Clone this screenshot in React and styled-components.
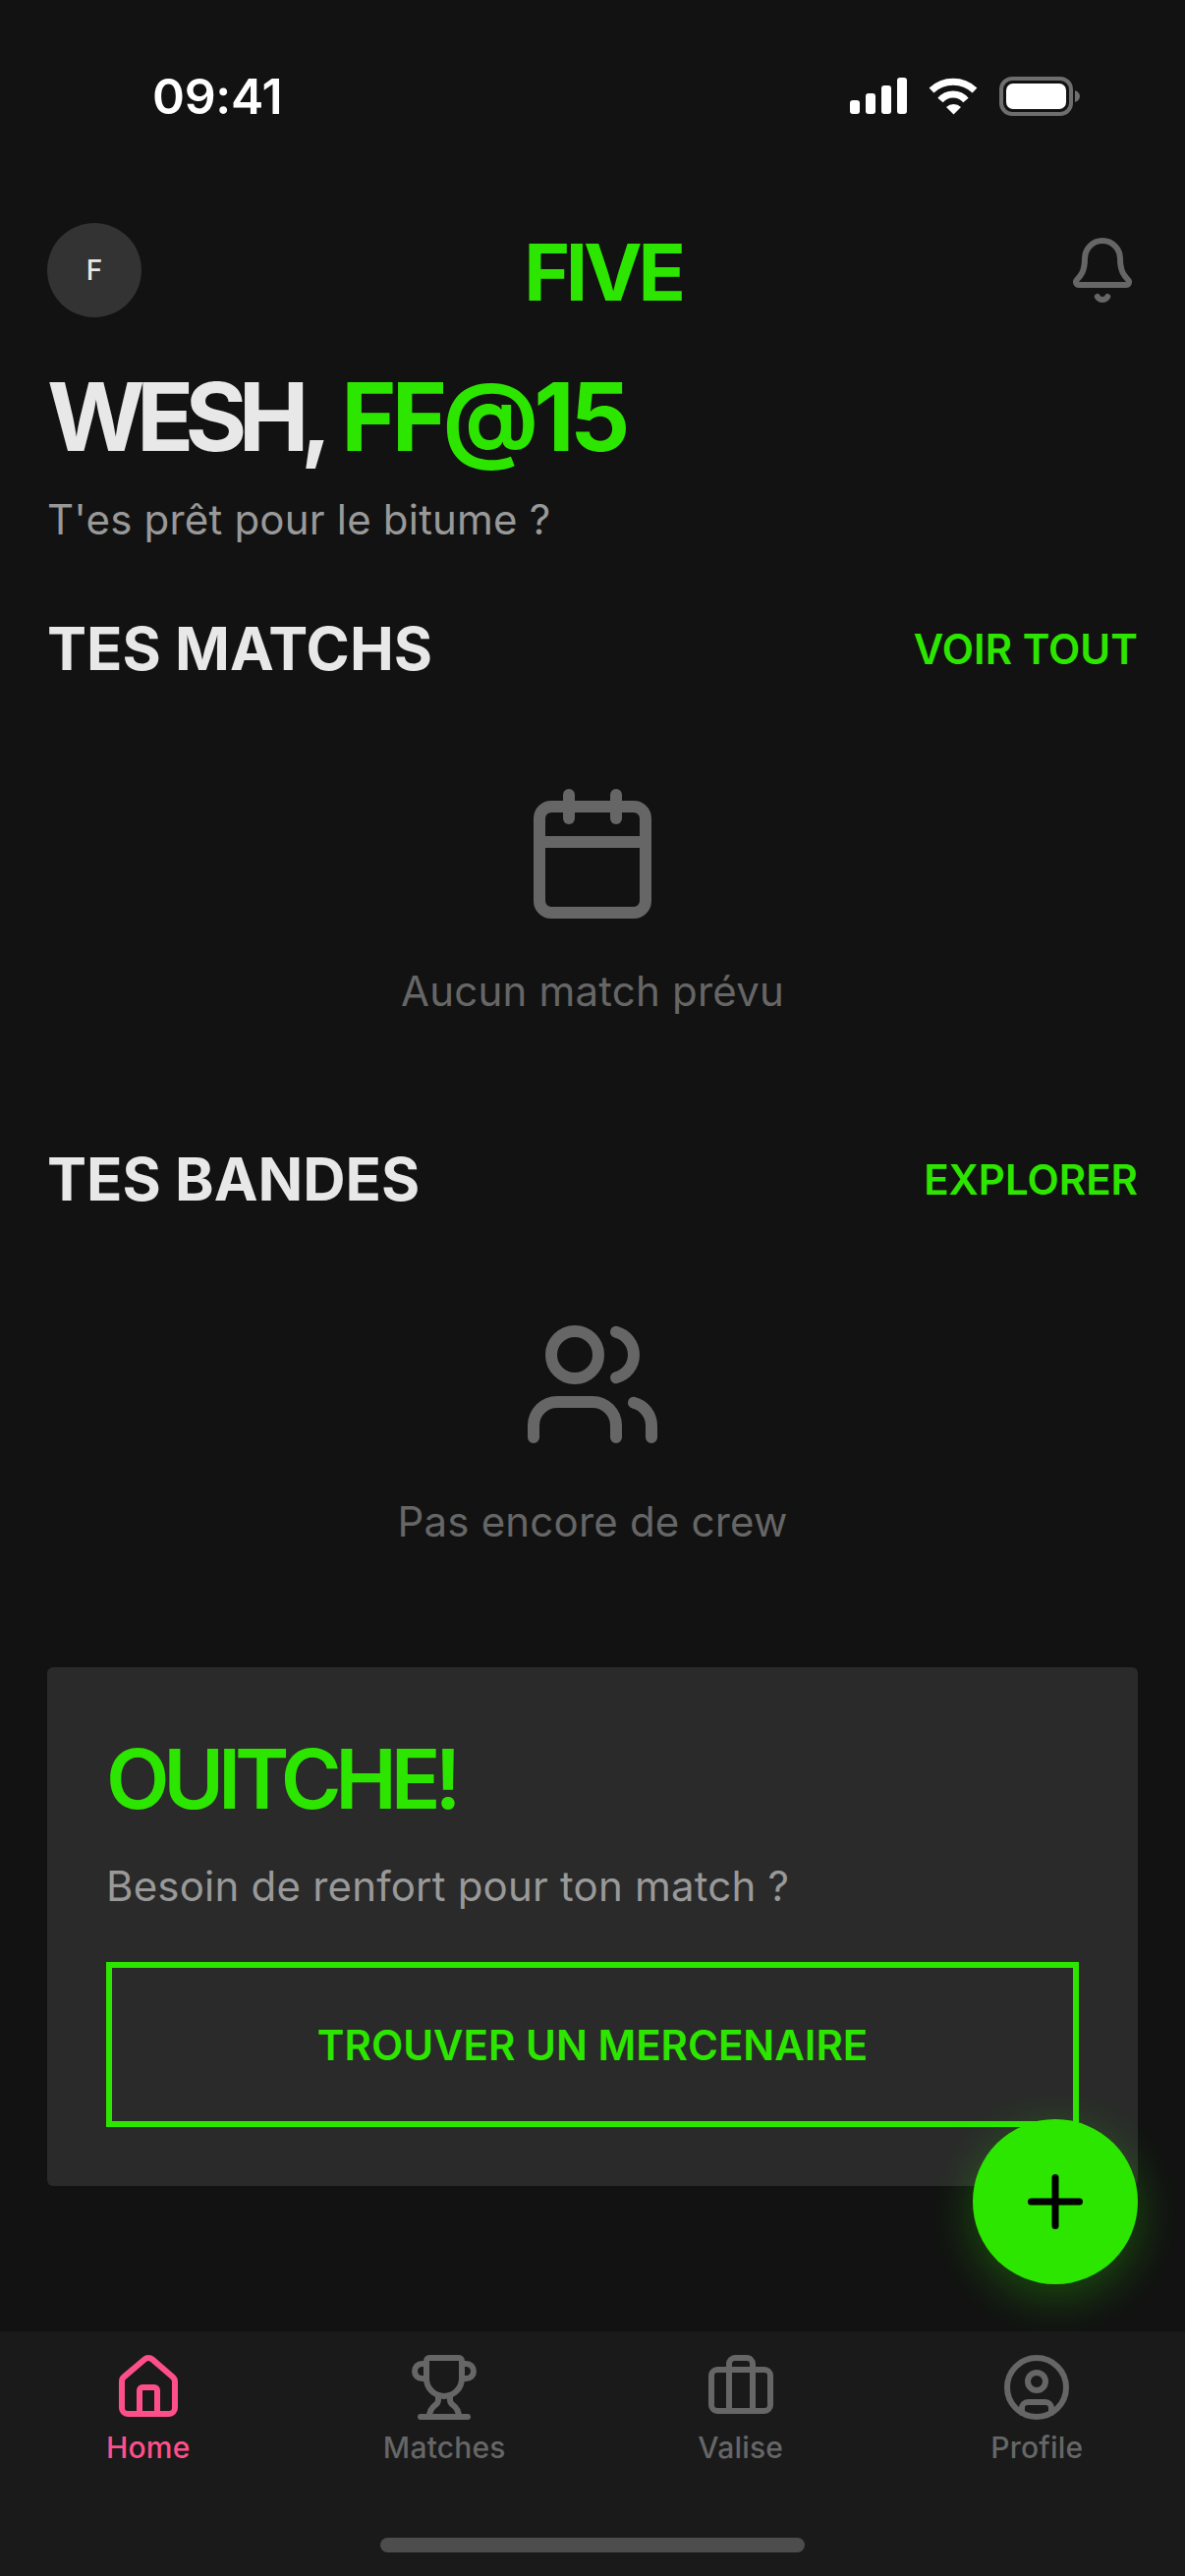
import styled, { createGlobalStyle } from "styled-components"
import { Bell, Briefcase, Calendar, CircleUser, House, Plus, Trophy, Users } from "lucide-react"

const GREEN = "#2de600"
const GREY = "#666666"
const PINK = "#ff4f8b"

const GlobalStyle = createGlobalStyle`
    html, body {
        margin: 0;
        padding: 0;
        background: #121212;
    }
    * {
        box-sizing: border-box;
    }
`

const Screen = styled.div`
    position: relative;
    width: 1206px;
    height: 2622px;
    display: flex;
    flex-direction: column;
    background: #121212;
    font-family: Inter, "Liberation Sans", sans-serif;
    overflow: hidden;
`

const StatusBar = styled.div`
    height: 196px;
    flex-shrink: 0;
    display: flex;
    justify-content: space-between;
    align-items: center;
    padding: 0 106px 0 155px;
`
const Time = styled.div`
    font-size: 50px;
    font-weight: 600;
    letter-spacing: -0.3px;
    color: #fff;
`
const StatusIcons = styled.svg`
    display: block;
    width: 235px;
    height: 40px;
`

const Main = styled.div`
    flex: 1;
    padding: 31px 48px 0;
`
const Header = styled.div`
    display: flex;
    justify-content: space-between;
    align-items: center;
    height: 96px;
`
const Avatar = styled.div`
    width: 96px;
    height: 96px;
    border-radius: 50%;
    display: flex;
    justify-content: center;
    align-items: center;
    background: #333333;
    color: #e8e8e8;
    font-size: 28px;
    font-weight: 500;
`
const Logo = styled.div`
    margin: 3px 3px 0 0;
    font-size: 80px;
    line-height: 92px;
    font-weight: 700;
    letter-spacing: -4.3px;
    color: ${GREEN};
`
const Greeting = styled.h1`
    margin: 43px 0 0;
    font-size: 96px;
    line-height: 116px;
    font-weight: 700;
    letter-spacing: -8.7px;
    color: #e8e8e8;
`
const Accent = styled.span`
    margin-left: 7px;
    letter-spacing: -4.7px;
    color: ${GREEN};
`
const Tagline = styled.p`
    margin: 17px 0 0;
    font-size: 42px;
    line-height: 60px;
    letter-spacing: 0.2px;
    color: #999999;
`

const SectionHeader = styled.div`
    display: flex;
    justify-content: space-between;
    align-items: center;
    margin-top: ${props => props.$top}px;
    height: 60px;
`
const SectionTitle = styled.h2`
    margin: 0;
    font-size: 60px;
    font-weight: 700;
    color: #e8e8e8;
`
const SectionLink = styled.a`
    font-size: 42px;
    font-weight: 600;
    color: ${GREEN};
`
const EmptyState = styled.div`
    display: flex;
    flex-direction: column;
    align-items: center;
    gap: 40px;
    padding-top: 107px;
    color: ${GREY};
`
const EmptyText = styled.div`
    font-size: 42px;
    line-height: 56px;
    letter-spacing: 0.2px;
`

const Card = styled.div`
    margin-top: 120px;
    padding: 64px 60px 60px;
    border-radius: 6px;
    background: #2a2a2a;
`
const CardTitle = styled.h3`
    margin: 0;
    font-size: 84px;
    line-height: 100px;
    font-weight: 600;
    letter-spacing: -6.2px;
    color: ${GREEN};
`
const CardText = styled.p`
    margin: 29px 0 0;
    font-size: 42px;
    line-height: 60px;
    letter-spacing: 0.2px;
    color: #999999;
`
const OutlineButton = styled.button`
    display: block;
    width: 100%;
    height: 168px;
    margin-top: 47px;
    border: 6px solid ${GREEN};
    border-radius: 0;
    background: transparent;
    color: ${GREEN};
    font-family: inherit;
    font-size: 42px;
    font-weight: 600;
`

const Fab = styled.button`
    position: absolute;
    right: 48px;
    bottom: 297px;
    width: 168px;
    height: 168px;
    display: flex;
    justify-content: center;
    align-items: center;
    border: none;
    border-radius: 50%;
    background: ${GREEN};
    color: #000;
    box-shadow: 0 12px 48px rgba(45, 230, 0, 0.3);
`

const TabBar = styled.div`
    position: relative;
    height: 249px;
    flex-shrink: 0;
    display: flex;
    align-items: flex-start;
    padding-top: 21px;
    background: #1a1a1a;
`
const Tab = styled.div`
    flex: 1;
    display: flex;
    flex-direction: column;
    align-items: center;
    gap: 4px;
    color: ${props => (props.$active ? PINK : GREY)};
`
const TabLabel = styled.span`
    font-size: 30px;
    line-height: 43px;
    font-weight: 500;
    letter-spacing: 0.2px;
`
const HomeIndicator = styled.div`
    position: absolute;
    left: 387px;
    bottom: 24px;
    width: 432px;
    height: 15px;
    border-radius: 8px;
    background: #4d4d4d;
`

const tabs = [
    { label: "Home", Icon: House, active: true },
    { label: "Matches", Icon: Trophy },
    { label: "Valise", Icon: Briefcase },
    { label: "Profile", Icon: CircleUser },
]

const App = () => {
    return (
        <Screen>
            <GlobalStyle />
            <StatusBar>
                <Time>09:41</Time>
                <StatusIcons viewBox="0 0 235 40">
                    <rect x="0" y="24" width="10" height="14" rx="3" fill="#fff" />
                    <rect x="16" y="17" width="10" height="21" rx="3" fill="#fff" />
                    <rect x="32" y="9" width="10" height="29" rx="3" fill="#fff" />
                    <rect x="48" y="1" width="10" height="37" rx="3" fill="#fff" />
                    <path d="M83 14a32 32 0 0 1 44 0" fill="none" stroke="#fff" strokeWidth="7" />
                    <path d="M92 24a17 17 0 0 1 26 0" fill="none" stroke="#fff" strokeWidth="7" />
                    <path d="M98 31a11 11 0 0 1 15 0l-7.5 7.5z" fill="#fff" />
                    <rect x="154" y="2" width="71" height="36" rx="11" fill="none" stroke="#6e6e6e" strokeWidth="4" />
                    <rect x="159" y="7" width="61" height="26" rx="7" fill="#fff" />
                    <path d="M229 14c3 1 5 3 5 6s-2 5-5 6z" fill="#6e6e6e" />
                </StatusIcons>
            </StatusBar>

            <Main>
                <Header>
                    <Avatar>F</Avatar>
                    <Logo>FIVE</Logo>
                    <Bell size={72} color={GREY} />
                </Header>
                <Greeting>
                    WESH, <Accent>FF@15</Accent>
                </Greeting>
                <Tagline>T'es prêt pour le bitume ?</Tagline>

                <SectionHeader $top={71}>
                    <SectionTitle>TES MATCHS</SectionTitle>
                    <SectionLink>VOIR TOUT</SectionLink>
                </SectionHeader>
                <EmptyState>
                    <Calendar size={144} />
                    <EmptyText>Aucun match prévu</EmptyText>
                </EmptyState>

                <SectionHeader $top={133}>
                    <SectionTitle>TES BANDES</SectionTitle>
                    <SectionLink>EXPLORER</SectionLink>
                </SectionHeader>
                <EmptyState>
                    <Users size={144} />
                    <EmptyText>Pas encore de crew</EmptyText>
                </EmptyState>

                <Card>
                    <CardTitle>OUITCHE!</CardTitle>
                    <CardText>Besoin de renfort pour ton match ?</CardText>
                    <OutlineButton>TROUVER UN MERCENAIRE</OutlineButton>
                </Card>
            </Main>

            <Fab>
                <Plus size={84} />
            </Fab>

            <TabBar>
                {tabs.map(({ label, Icon, active }) => (
                    <Tab key={label} $active={active}>
                        <Icon size={72} />
                        <TabLabel>{label}</TabLabel>
                    </Tab>
                ))}
                <HomeIndicator />
            </TabBar>
        </Screen>
    )
}

export default App
